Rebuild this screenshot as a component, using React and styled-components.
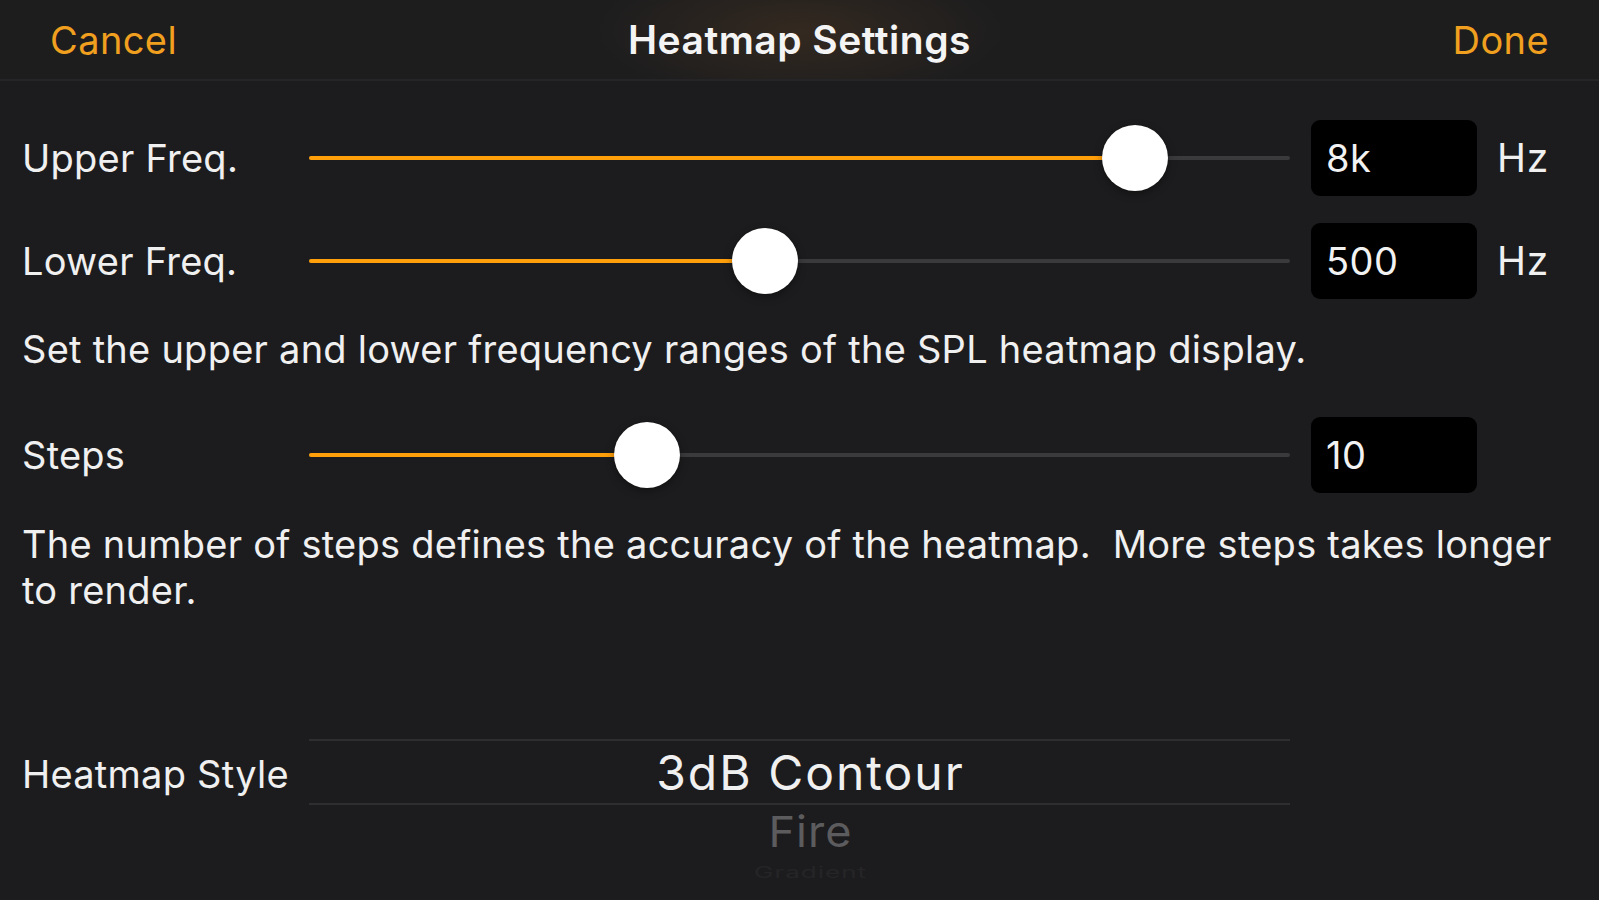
import React from "react";
import styled, { createGlobalStyle } from "styled-components";

const Global = createGlobalStyle`
  html, body { margin: 0; padding: 0; background: #1c1c1e; }
  body { font-family: Inter, "Liberation Sans", Arial, sans-serif; color: #f2f2f2; }
  * { box-sizing: border-box; }
`;

const Page = styled.div`
  width: 1599px;
  height: 900px;
  overflow: hidden;
  background: #1c1c1e;
  display: flex;
  flex-direction: column;
`;

const Header = styled.header`
  height: 81px;
  flex: none;
  display: grid;
  grid-template-columns: 1fr auto 1fr;
  align-items: center;
  padding: 0 50px;
  background:
    radial-gradient(ellipse 260px 90px at 50% 40%, rgba(110, 72, 36, 0.28), rgba(0,0,0,0) 80%),
    #1d1d1e;
  border-bottom: 2px solid #252527;
`;

const NavButton = styled.span`
  color: #f0a01e;
  font-size: 38px;
  justify-self: ${(p) => (p.$right ? "end" : "start")};
  letter-spacing: 0.4px;
`;

const Title = styled.h1`
  margin: 0;
  font-size: 39px;
  font-weight: 600;
  color: #f4f4f4;
  letter-spacing: 0.5px;
`;

const Body = styled.main`
  display: flex;
  flex-direction: column;
  padding: 25px 0 0 22px;
`;

const Row = styled.div`
  height: 103px;
  margin-top: ${(p) => p.$mt || 0}px;
  display: grid;
  grid-template-columns: 287px 981px 187px auto;
  align-items: center;
`;

const Label = styled.span`
  font-size: 38px;
  color: #f0f0f0;
  letter-spacing: 0.25px;
  white-space: nowrap;
`;

const Track = styled.div`
  position: relative;
  height: 4px;
  border-radius: 2px;
  background: #3a3a3c;
`;

const Fill = styled.div`
  height: 100%;
  border-radius: 2px;
  background: #ff9f0a;
`;

const Thumb = styled.div`
  position: absolute;
  top: 50%;
  width: 66px;
  height: 66px;
  margin: -33px 0 0 -33px;
  border-radius: 50%;
  background: #ffffff;
  box-shadow: 0 3px 8px rgba(0, 0, 0, 0.35), 0 0 1px rgba(0, 0, 0, 0.4);
`;

const ValueBox = styled.div`
  margin-left: 21px;
  width: 166px;
  height: 76px;
  border-radius: 9px;
  background: #000;
  display: flex;
  align-items: center;
  padding-left: 15px;
  font-size: 38px;
  color: #f2f2f2;
  letter-spacing: 0.5px;
`;

const Unit = styled.span`
  margin-left: 20px;
  font-size: 39px;
  color: #f0f0f0;
  letter-spacing: 0.8px;
`;

const Note = styled.p`
  margin: ${(p) => p.$mt}px 0 0 0;
  width: 1545px;
  font-size: 38px;
  line-height: 46px;
  color: #f0f0f0;
  letter-spacing: 0.25px;
  white-space: pre-wrap;
`;

const PickerRow = styled.div`
  margin-top: ${(p) => p.$mt}px;
  display: grid;
  grid-template-columns: 287px 981px;
  align-items: start;
`;

const PickerLabel = styled(Label)`
  margin-top: 12px;
`;

const Wheel = styled.div`
  display: flex;
  flex-direction: column;
  align-items: center;
`;

const Selected = styled.div`
  width: 100%;
  height: 66px;
  padding-left: 22px;
  border-top: 2px solid #2e2e30;
  border-bottom: 2px solid #2e2e30;
  display: flex;
  align-items: center;
  justify-content: center;
  font-size: 48px;
  color: #f0f0f0;
  letter-spacing: 2px;
`;

const Option = styled.div`
  height: ${(p) => p.$h}px;
  padding-left: 22px;
  display: flex;
  align-items: center;
  justify-content: center;
  font-size: ${(p) => p.$size}px;
  color: ${(p) => p.$color};
  transform: scaleY(${(p) => p.$sy});
  letter-spacing: 1px;
`;

function Slider({ value }) {
  const pct = `${value * 100}%`;
  return (
    <Track>
      <Fill style={{ width: pct }} />
      <Thumb style={{ left: pct }} />
    </Track>
  );
}

function SliderRow({ label, value, text, unit, mt }) {
  return (
    <Row $mt={mt}>
      <Label>{label}</Label>
      <Slider value={value} />
      <ValueBox>{text}</ValueBox>
      {unit ? <Unit>{unit}</Unit> : <span />}
    </Row>
  );
}

export default function App() {
  return (
    <Page>
      <Global />
      <Header>
        <NavButton>Cancel</NavButton>
        <Title>Heatmap Settings</Title>
        <NavButton $right>Done</NavButton>
      </Header>
      <Body>
        <SliderRow label="Upper Freq." value={0.842} text="8k" unit="Hz" />
        <SliderRow label="Lower Freq." value={0.465} text="500" unit="Hz" />
        <Note $mt={14}>Set the upper and lower frequency ranges of the SPL heatmap display.</Note>
        <SliderRow label="Steps" value={0.345} text="10" mt={31} />
        <Note $mt={15}>{"The number of steps defines the accuracy of the heatmap.  More steps takes longer to render."}</Note>
        <PickerRow $mt={126}>
          <PickerLabel>Heatmap Style</PickerLabel>
          <Wheel>
            <Selected>3dB Contour</Selected>
            <Option $h={52} $size={45} $color="#5c5c5e" $sy={0.95}>Fire</Option>
            <Option $h={30} $size={26} $color="#252527" $sy={0.6}>Gradient</Option>
          </Wheel>
        </PickerRow>
      </Body>
    </Page>
  );
}
